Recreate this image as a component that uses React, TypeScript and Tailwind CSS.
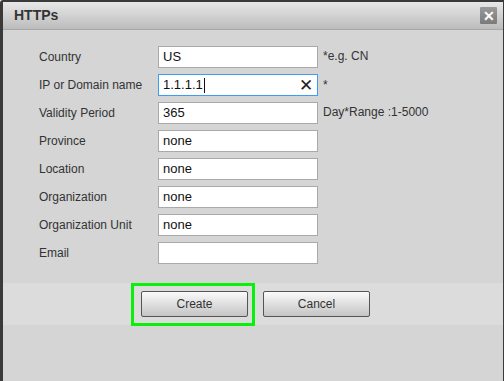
import { useState } from "react"

type Row = { label: string; value: string; hint?: string; focused?: boolean }

const rows: Row[] = [
  { label: "Country", value: "US", hint: "*e.g. CN" },
  { label: "IP or Domain name", value: "1.1.1.1", hint: "*", focused: true },
  { label: "Validity Period", value: "365", hint: "Day*Range :1-5000" },
  { label: "Province", value: "none" },
  { label: "Location", value: "none" },
  { label: "Organization", value: "none" },
  { label: "Organization Unit", value: "none" },
  { label: "Email", value: "" },
]

function Field({ row }: { row: Row }) {
  if (row.focused) {
    return (
      <div className="flex h-[22px] w-[160px] items-center border border-[#3e9cf5] bg-white pl-[4px] pr-[4px] text-[13px] text-[#111]">
        <span>{row.value}</span>
        <span className="ml-px inline-block h-[15px] w-px bg-[#111]" />
        <span className="ml-auto text-[17px] leading-none text-[#222]">✕</span>
      </div>
    )
  }
  return (
    <div className="flex h-[22px] w-[160px] items-center border border-[#a9a9a9] bg-white pl-[4px] text-[13px] text-[#111]">
      {row.value}
    </div>
  )
}

export default function App() {
  const [, setOpen] = useState(true)

  return (
    <div
      className="flex h-[381px] w-[504px] flex-col overflow-hidden rounded-tl-[3px] border-t-2 border-l-[3px] border-r border-[#3a3a3a] bg-[#d5d5d5]"
      style={{ fontFamily: '"Liberation Sans", Arial, sans-serif' }}
    >
      <div className="flex h-[28px] shrink-0 items-center justify-between border-b border-[#a8a8a8] bg-gradient-to-b from-[#e8e8e8] to-[#bcbcbc] pl-[11px] pr-[6px]">
        <span className="text-[14px] font-bold text-[#333]">HTTPs</span>
        <button
          onClick={() => setOpen(false)}
          className="flex h-[17px] w-[17px] items-center justify-center rounded-[1px] bg-gradient-to-b from-[#9a9a9a] to-[#7a7a7a] text-[14px] font-bold leading-none text-white"
        >
          ✕
        </button>
      </div>

      <div className="flex flex-col pt-[13px] pl-[36px]">
        {rows.map((row) => (
          <div key={row.label} className="flex h-[28px] items-center">
            <span className="w-[119px] text-[12px] text-[#333]">{row.label}</span>
            <Field row={row} />
            {row.hint && (
              <span className={`ml-[5px] text-[12px] text-[#333] ${row.hint === "*" ? "self-start pt-[5px]" : "-mt-[3px]"}`}>
                {row.hint}
              </span>
            )}
          </div>
        ))}
      </div>

      <div className="mt-[16px] flex h-[42px] items-center gap-[15px] bg-[#dcdcdc] pl-[138px]">
        <div className="relative">
          <div className="absolute -top-[8px] -bottom-[9px] -left-[10px] -right-[7px] border-[3px] border-[#0af00a]" />
          <button className="relative h-[26px] w-[107px] rounded-[2px] border border-[#555] bg-gradient-to-b from-[#fbfbfb] to-[#c4c4c4] text-[12px] text-[#333]">
            Create
          </button>
        </div>
        <button className="h-[26px] w-[107px] rounded-[2px] border border-[#555] bg-gradient-to-b from-[#fbfbfb] to-[#c4c4c4] text-[12px] text-[#333]">
          Cancel
        </button>
      </div>
    </div>
  )
}
